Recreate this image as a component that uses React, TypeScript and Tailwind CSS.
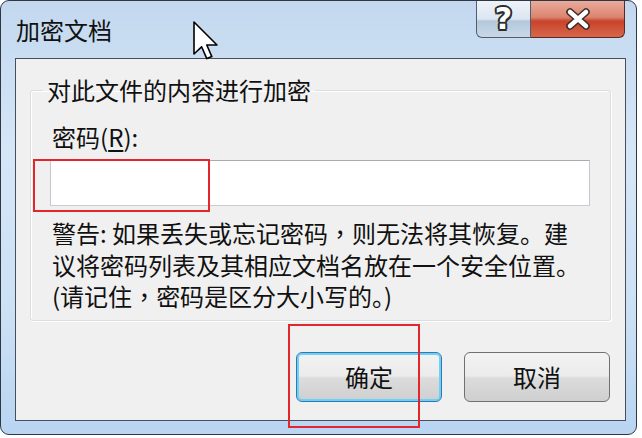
import React from 'react';

const font = "font-['Noto_Sans_CJK_SC','Noto_Sans',sans-serif]";

const btn =
    'w-[146px] h-[50px] rounded-[6px] text-[24px] leading-none text-[#111] flex items-center justify-center bg-[linear-gradient(to_bottom,#f3f3f3_0%,#ebebeb_48%,#dcdcdc_52%,#cfcfcf_100%)]';

// centred full-width comma, as the original dialog font draws it
const Comma = () => (
    <span className="font-['Noto_Sans_CJK_TC',sans-serif]">，</span>
);

function CloseGlyph() {
    return (
        <svg width="26" height="22" viewBox="0 0 26 22">
            <path
                d="M5 4 L21 18 M21 4 L5 18"
                stroke="#3a2a28"
                strokeWidth="7.5"
                strokeLinecap="round"
            />
            <path
                d="M5 4 L21 18 M21 4 L5 18"
                stroke="#ffffff"
                strokeWidth="4.5"
                strokeLinecap="round"
            />
        </svg>
    );
}

function Cursor() {
    return (
        <svg
            className="absolute left-[193px] top-[21px]"
            width="26"
            height="40"
            viewBox="0 0 13 20"
        >
            <path
                d="M0.5 0.5 L0.5 16.5 L4.3 12.9 L6.9 18.8 L9.4 17.8 L6.9 12 L12 12 Z"
                fill="#ffffff"
                stroke="#000000"
                strokeWidth="0.8"
                strokeLinejoin="round"
            />
        </svg>
    );
}

export default function App() {
    return (
        <div className={`relative w-[642px] h-[438px] bg-white overflow-hidden ${font}`}>
            <div className="w-[637px] h-[435px] rounded-[9px] border border-[#2f3842] bg-[linear-gradient(to_bottom,#c3d8ef_0%,#d5e6f7_35%,#cde1f5_70%,#b9d5f2_100%)] flex flex-col">
                {/* title bar */}
                <div className="h-[57px] flex items-start">
                    <div className="pl-[15px] pt-[15px] text-[24px] leading-[28px] text-[#111]">
                        加密文档
                    </div>
                    <div className="ml-auto mr-[11px] flex">
                        <div className="w-[55px] h-[37px] border border-t-0 border-[#4f5d6e] rounded-bl-[6px] bg-[linear-gradient(to_bottom,#eef3f9_0%,#dce6f1_50%,#b4c8dc_56%,#c9d8e7_100%)] flex items-center justify-center">
                            <span className="font-['DejaVu_Sans',sans-serif] text-[30px] font-bold leading-none text-white [text-shadow:2px_0_0_#2d2d2d,-2px_0_0_#2d2d2d,0_2px_0_#2d2d2d,0_-2px_0_#2d2d2d,1.5px_1.5px_0_#2d2d2d,-1.5px_-1.5px_0_#2d2d2d,1.5px_-1.5px_0_#2d2d2d,-1.5px_1.5px_0_#2d2d2d]">
                                ?
                            </span>
                        </div>
                        <div className="w-[94px] h-[37px] border border-t-0 border-l-0 border-[#5a2a20] rounded-br-[6px] bg-[linear-gradient(to_bottom,#eaab9c_0%,#db856f_45%,#c8432a_56%,#d6674c_100%)] flex items-center justify-center">
                            <CloseGlyph />
                        </div>
                    </div>
                </div>

                {/* client area */}
                <div className="ml-[14px] w-[611px] h-[363px] border border-[#46505c] bg-[#f0f0f0] flex flex-col">
                    <fieldset className="ml-[14px] mt-[17px] w-[581px] border border-[#d9dee3] rounded-[3px] pb-[8px] shadow-[inset_1px_1px_0_#fff,1px_1px_0_#fff]">
                        <legend className="ml-[12px] px-[4px] text-[24px] leading-[28px] text-[#111]">
                            对此文件的内容进行加密
                        </legend>
                        <div className="mt-[19px] pl-[21px] text-[24px] leading-[28px] text-[#111]">
                            密码(<span className="underline underline-offset-[3px]">R</span>):
                        </div>
                        <div className="mt-[9px] ml-[19px] w-[540px] h-[46px] bg-white border border-[#a9abb1] border-b-[#c9cdd3] border-l-[#c4c7cd] border-r-[#c4c7cd]" />
                        <div className="mt-[11px] pl-[21px] text-[24px] leading-[31.5px] text-[#111] whitespace-nowrap">
                            <div>
                                警告: 如果丢失或忘记密码<Comma />则无法将其恢复。建
                            </div>
                            <div>议将密码列表及其相应文档名放在一个安全位置。</div>
                            <div>
                                (请记住<Comma />密码是区分大小写的。)
                            </div>
                        </div>
                    </fieldset>

                    <div className="mt-[31px] pr-[15px] flex justify-end gap-[22px]">
                        <button className={`${btn} border border-[#2f78b4] shadow-[inset_0_0_0_2px_#6fd0f5]`}>
                            确定
                        </button>
                        <button className={`${btn} border border-[#707070]`}>
                            取消
                        </button>
                    </div>
                </div>
            </div>

            {/* annotation boxes */}
            <div className="absolute left-[33px] top-[159px] w-[177px] h-[53px] border-2 border-[#e1262c]" />
            <div className="absolute left-[288px] top-[324px] w-[132px] h-[104px] border-2 border-[#e1262c]" />

            <Cursor />
        </div>
    );
}
